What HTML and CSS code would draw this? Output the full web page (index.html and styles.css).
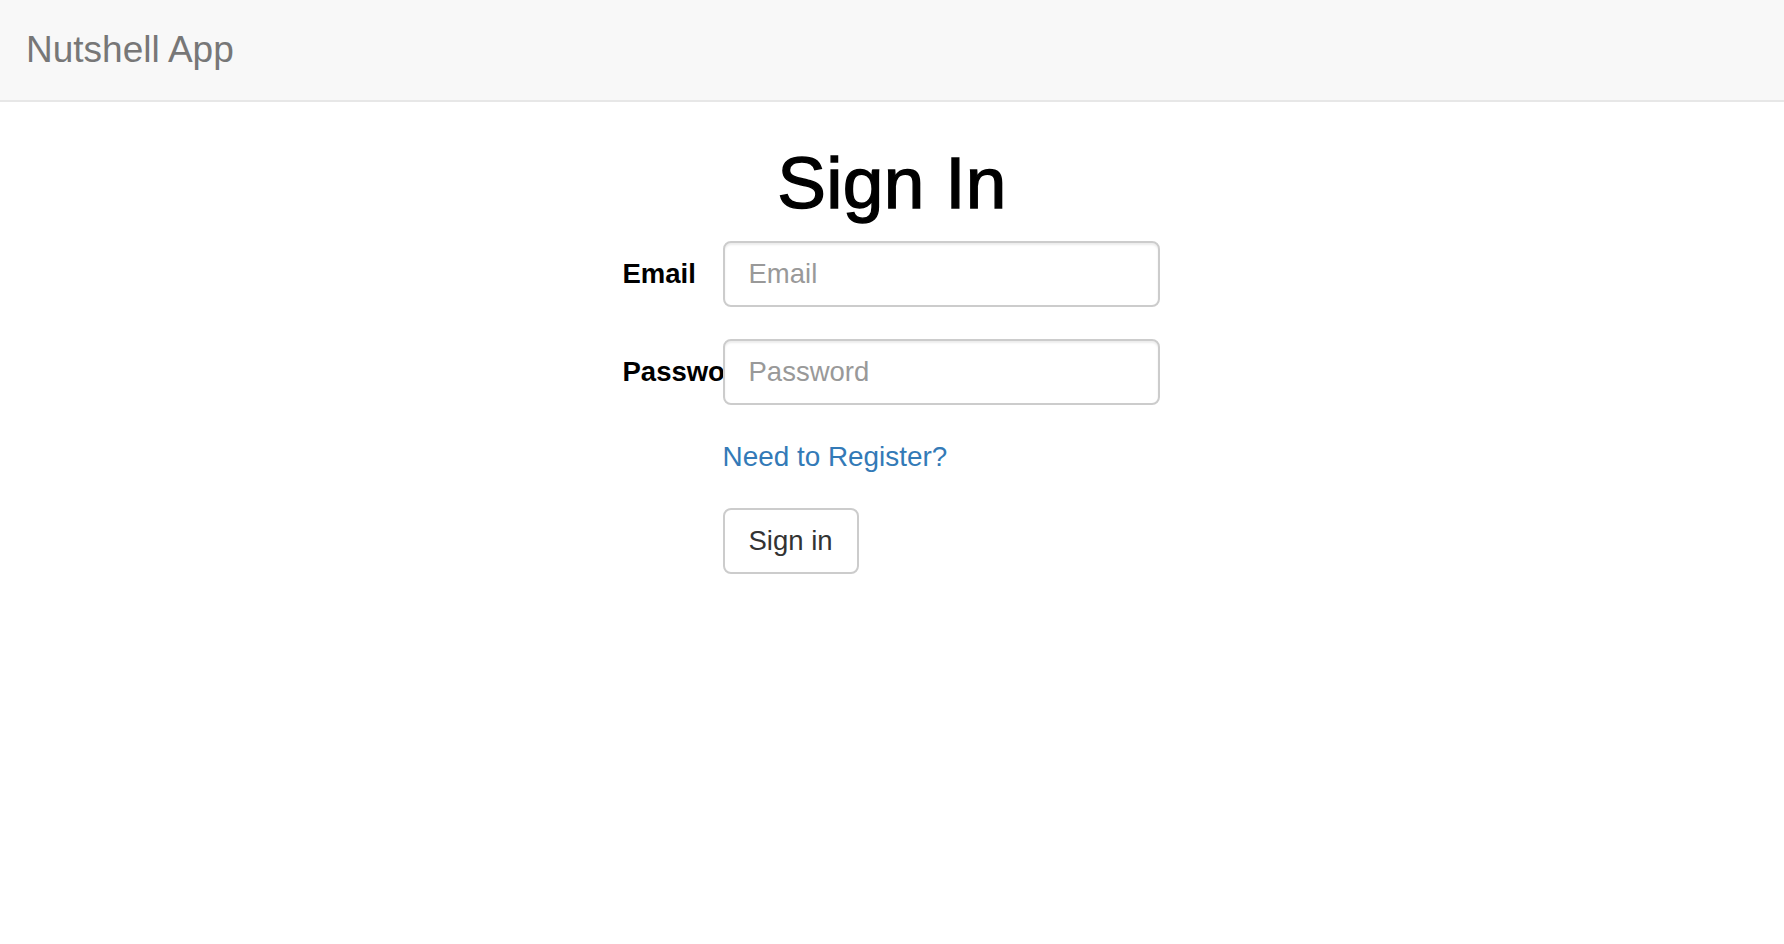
FILE: index.html
```html
<!DOCTYPE html>
<html lang="en">
<head>
<meta charset="utf-8">
<title>Nutshell App</title>
<link rel="stylesheet" href="styles.css">
</head>
<body>
<nav class="navbar">
  <a class="brand" href="#">Nutshell App</a>
</nav>
<main class="main">
  <h1 class="title">Sign In</h1>
  <form class="signin-form">
    <label class="field-label" for="email">Email</label>
    <input class="field-input" id="email" type="email" placeholder="Email">
    <label class="field-label" for="password">Password</label>
    <input class="field-input" id="password" type="password" placeholder="Password">
    <div class="offset-cell">
      <a class="register-link" href="#">Need to Register?</a>
    </div>
    <div class="offset-cell">
      <button class="btn" type="submit">Sign in</button>
    </div>
  </form>
</main>
</body>
</html>
```

FILE: styles.css
```css
* {
  box-sizing: border-box;
}

html, body {
  margin: 0;
  padding: 0;
  background: #fff;
}

body {
  font-family: "Liberation Sans", Helvetica, Arial, sans-serif;
  font-size: 27px;
  color: #333;
}

.navbar {
  height: 102px;
  background: #f8f8f8;
  border-bottom: 2px solid #e7e7e7;
  display: flex;
  align-items: center;
  padding-left: 26px;
}

.brand {
  font-size: 37px;
  color: #777;
  text-decoration: none;
  line-height: 1;
  margin-top: -2px;
}

.main {
  padding-top: 42px;
}

.title {
  margin: 0;
  text-align: center;
  font-size: 73px;
  font-weight: 400;
  line-height: 77px;
  color: #000;
  -webkit-text-stroke: 1.4px #000;
  letter-spacing: 0.3px;
}

.signin-form {
  margin: 20px auto 0;
  width: 537px;
  display: grid;
  grid-template-columns: 100px 437px;
  row-gap: 32px;
  transform: translateX(-1px);
}

.field-label {
  align-self: center;
  font-weight: 700;
  font-size: 27.5px;
  color: #000;
  white-space: nowrap;
  line-height: 38px;
}

.field-input {
  height: 66px;
  width: 437px;
  border: 2px solid #ccc;
  border-radius: 8px;
  padding: 0 24px;
  font-family: inherit;
  font-size: 27.5px;
  color: #555;
  background: #fff;
  box-shadow: inset 0 2px 2px rgba(0, 0, 0, 0.075);
  outline: none;
}

.field-input::placeholder {
  color: #999;
  opacity: 1;
}

.offset-cell {
  grid-column: 2;
}

.register-link {
  display: inline-block;
  margin-top: 1px;
  font-size: 27.9px;
  line-height: 38px;
  color: #337ab7;
  text-decoration: none;
}

.btn {
  height: 66px;
  padding: 0 24px;
  border: 2px solid #ccc;
  border-radius: 8px;
  background: #fff;
  color: #333;
  font-family: inherit;
  font-size: 27.5px;
  cursor: pointer;
  margin-top: 0;
}
```
